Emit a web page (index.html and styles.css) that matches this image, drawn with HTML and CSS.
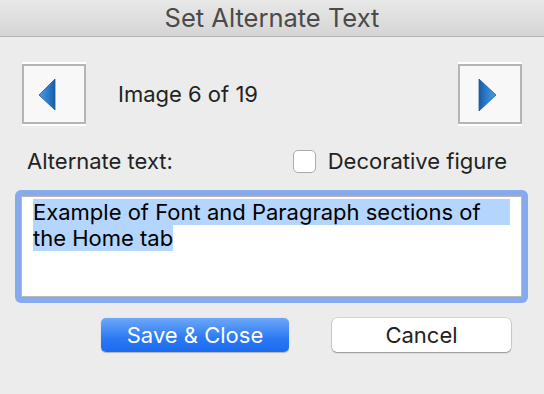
FILE: index.html
```html
<!DOCTYPE html>
<html>
<head>
<meta charset="utf-8">
<link rel="stylesheet" href="styles.css">
</head>
<body>
<div class="window">
  <div class="titlebar">Set Alternate Text</div>
  <div class="content">
    <div class="nav-row">
      <button class="nav-btn" aria-label="Previous">
        <svg width="60" height="56" viewBox="0 0 60 56">
          <defs>
            <linearGradient id="gl" x1="0" y1="0" x2="1" y2="0">
              <stop offset="0" stop-color="#4a9be0"/>
              <stop offset="0.6" stop-color="#2a7acb"/>
              <stop offset="1" stop-color="#1a5aa0"/>
            </linearGradient>
          </defs>
          <polygon points="15,29 31,13 31,44" fill="url(#gl)" stroke="#1d5d9f" stroke-width="0.8" stroke-linejoin="round"/>
        </svg>
      </button>
      <span class="counter">Image 6 of 19</span>
      <span class="spacer"></span>
      <button class="nav-btn" aria-label="Next">
        <svg width="60" height="56" viewBox="0 0 60 56">
          <defs>
            <linearGradient id="gr" x1="0" y1="0" x2="1" y2="0">
              <stop offset="0" stop-color="#1a5aa0"/>
              <stop offset="0.4" stop-color="#2a7acb"/>
              <stop offset="1" stop-color="#4a9be0"/>
            </linearGradient>
          </defs>
          <polygon points="36,29 19,13 19,45" fill="url(#gr)" stroke="#1d5d9f" stroke-width="0.8" stroke-linejoin="round"/>
        </svg>
      </button>
    </div>
    <div class="label-row">
      <span class="label">Alternate text:</span>
      <label class="check">
        <span class="box"></span>
        <span>Decorative figure</span>
      </label>
    </div>
    <div class="focus-ring">
      <div class="textarea">
        <span class="sel sel-full">Example of Font and Paragraph sections of</span>
        <span class="sel">the Home tab</span>
      </div>
    </div>
    <div class="actions">
      <button class="btn primary">Save &amp; Close</button>
      <button class="btn secondary">Cancel</button>
    </div>
  </div>
</div>
</body>
</html>
```
FILE: styles.css
```css
* { box-sizing: border-box; }
html, body {
  margin: 0;
  padding: 0;
  width: 544px;
  height: 394px;
  overflow: hidden;
  background: #ececec;
  font-family: Inter, "Helvetica Neue", "Liberation Sans", sans-serif;
  color: #222;
}
.window { width: 544px; height: 394px; }
.titlebar {
  height: 37px;
  background: linear-gradient(#e8e8e8, #d5d5d5);
  border-bottom: 1px solid #b3b3b3;
  text-align: center;
  font-size: 25.5px;
  line-height: 35px;
  color: #4a4a4a;
}
.content { padding: 0 22px 0 15px; }
.nav-row {
  display: flex;
  align-items: center;
  margin-top: 27px;
  padding-left: 7px;
}
.nav-btn {
  width: 64px;
  height: 60px;
  padding: 0;
  margin: 0;
  border: 2px solid #b5b5b5;
  background: #f8f8f8;
  box-shadow: 0 -2px 0 #fff, 0 2px 0 #fff;
  display: block;
}
.nav-btn svg { display: block; }
.counter {
  margin-left: 32px;
  font-size: 22px;
  color: #222;
}
.spacer { flex: 1; }
.label-row {
  display: flex;
  align-items: center;
  margin-top: 25px;
  height: 24px;
  font-size: 22px;
  color: #222;
}
.label { margin-left: 12px; }
.check {
  display: flex;
  align-items: center;
  gap: 12px;
  margin-left: auto;
  margin-right: 15px;
}
.box {
  width: 23px;
  height: 23px;
  border: 1px solid #ababab;
  border-radius: 5px;
  background: #fff;
}
.focus-ring {
  margin-top: 17px;
  width: 513px;
  height: 113px;
  padding: 6px;
  background: #86aaec;
  border-radius: 6px;
}
.textarea {
  height: 100%;
  background: #fff;
  border: 1px solid #b9b9b9;
  padding: 2px 11px 0 11px;
  font-size: 22px;
  line-height: 26px;
  color: #000;
}
.sel { background: #b4d5fe; }
.sel-full { display: block; }
.actions {
  display: flex;
  margin-top: 15px;
  padding-left: 86px;
  gap: 43px;
}
.btn {
  height: 34px;
  font-family: inherit;
  font-size: 22px;
  border-radius: 5px;
  padding: 0;
  margin: 0;
}
.primary {
  width: 188px;
  color: #fff;
  border: none;
  background: linear-gradient(#6ea8f8, #2a79f4 60%, #1b6bf1);
  box-shadow: 0 0.5px 1px rgba(0,0,0,0.25);
}
.secondary {
  width: 179px;
  color: #222;
  background: #fff;
  border: none;
  box-shadow: 0 0 0 0.5px rgba(0,0,0,0.2), 0 1px 1.5px rgba(0,0,0,0.3);
}
```
